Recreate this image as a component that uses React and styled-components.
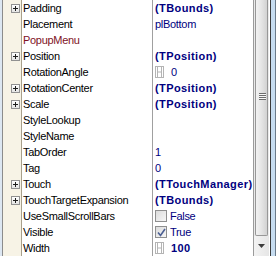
import React from 'react';
import styled, { createGlobalStyle, css } from 'styled-components';

const GlobalStyle = createGlobalStyle`
  html, body {
    margin: 0;
    padding: 0;
    background: #fff;
    overflow: hidden;
  }
`;

const Frame = styled.div`
  display: flex;
  width: 277px;
  height: 256px;
  overflow: hidden;
  font-family: "Liberation Sans", Arial, sans-serif;
  font-size: 11px;
`;

const LeftEdge = styled.div`
  width: 2px;
  flex-shrink: 0;
  background: #dde7f2;
  border-right: 1px solid #8c8c8c;
`;

const Grid = styled.div`
  display: flex;
  flex-direction: column;
  width: 250px;
  flex-shrink: 0;
`;

const Row = styled.div`
  display: flex;
  height: 16px;
  line-height: 16px;
`;

const Gutter = styled.div`
  width: 19px;
  flex-shrink: 0;
  background: #f7f3e6;
  border-right: 1px solid #a8a08c;
  display: flex;
  align-items: center;
  padding-left: 8px;
  box-sizing: border-box;
`;

const Name = styled.div`
  width: 131px;
  flex-shrink: 0;
  padding-left: 1px;
  box-sizing: border-box;
  border-right: 1px solid #a0a0a0;
  white-space: nowrap;
  overflow: hidden;
  letter-spacing: -0.3px;
  color: ${p => (p.$ref ? '#80121e' : '#000')};
`;

const Value = styled.div`
  flex: 1;
  min-width: 0;
  display: flex;
  align-items: center;
  padding-left: 2px;
  white-space: nowrap;
  overflow: hidden;
  color: #000080;
`;

const ValueText = styled.span`
  margin-left: ${p => p.$gap || 0}px;
  ${p =>
    p.$bold
      ? css`
          font-weight: bold;
          letter-spacing: 0.4px;
        `
      : css`
          letter-spacing: -0.3px;
        `}
`;

const PlusBox = styled.div`
  width: 9px;
  height: 9px;
  box-sizing: border-box;
  border: 1px solid #919191;
  background: linear-gradient(#ffffff, #e4e4e4);
  position: relative;

  &::before,
  &::after {
    content: '';
    position: absolute;
    background: #1e1e1e;
  }
  &::before {
    left: 1px;
    top: 3px;
    width: 5px;
    height: 1px;
  }
  &::after {
    left: 3px;
    top: 1px;
    width: 1px;
    height: 5px;
  }
`;

const CheckBox = styled.div`
  width: 12px;
  height: 12px;
  box-sizing: border-box;
  border: 1px solid #8f8f8f;
  background: linear-gradient(135deg, #dcdcdc, #f6f6f6);
  display: flex;
  align-items: center;
  justify-content: center;
  flex-shrink: 0;
`;

const Scrollbar = styled.div`
  width: 16px;
  flex-shrink: 0;
  display: flex;
  flex-direction: column;
  background: #eaeaea;
  border-left: 1px solid #9b9b9b;
  box-sizing: border-box;
`;

const Thumb = styled.div`
  height: 236px;
  margin: 0 1px;
  box-sizing: border-box;
  border: 1px solid #979797;
  border-top: none;
  border-radius: 0 0 2px 2px;
  background: linear-gradient(90deg, #f2f2f2, #e6e6e6 45%, #d2d2d2);
  position: relative;
`;

const Grip = styled.div`
  position: absolute;
  left: 3px;
  top: 93px;
  width: 7px;
  height: 7px;
  background: repeating-linear-gradient(#6e6e6e 0 1px, #f8f8f8 1px 2px);
`;

const ArrowButton = styled.div`
  flex: 1;
  display: flex;
  align-items: center;
  justify-content: center;
  background: linear-gradient(90deg, #f3f3f3, #e6e6e6);
`;

const RightEdge = styled.div`
  width: 7px;
  flex-shrink: 0;
  box-sizing: border-box;
  border-left: 1px solid #fff;
  background: linear-gradient(90deg, #3a3a3a 0 1px, #c6dcf0 1px 5px, #6a7a8a 5px);
`;

function SpinIcon() {
  return (
    <svg width="9" height="12" viewBox="0 0 9 12" style={{ flexShrink: 0 }}>
      <g fill="none" stroke="#b4b4b4" strokeWidth="1">
        <rect x="0.5" y="0.5" width="8" height="11" />
        <line x1="2.5" y1="0.5" x2="2.5" y2="11.5" />
        <line x1="6.5" y1="0.5" x2="6.5" y2="11.5" />
        <line x1="2.5" y1="6" x2="6.5" y2="6" />
      </g>
    </svg>
  );
}

function Check() {
  return (
    <svg width="9" height="9" viewBox="0 0 9 9">
      <path d="M1 4.5 L3.5 7.5 L8 1" fill="none" stroke="#4b5f93" strokeWidth="1.6" />
    </svg>
  );
}

const props = [
  { name: 'Padding', expand: true, value: '(TBounds)', bold: true },
  { name: 'Placement', value: 'plBottom' },
  { name: 'PopupMenu', ref: true, value: '' },
  { name: 'Position', expand: true, value: '(TPosition)', bold: true },
  { name: 'RotationAngle', spin: true, value: '0' },
  { name: 'RotationCenter', expand: true, value: '(TPosition)', bold: true },
  { name: 'Scale', expand: true, value: '(TPosition)', bold: true },
  { name: 'StyleLookup', value: '' },
  { name: 'StyleName', value: '' },
  { name: 'TabOrder', value: '1' },
  { name: 'Tag', value: '0' },
  { name: 'Touch', expand: true, value: '(TTouchManager)', bold: true },
  { name: 'TouchTargetExpansion', expand: true, value: '(TBounds)', bold: true },
  { name: 'UseSmallScrollBars', check: false, value: 'False' },
  { name: 'Visible', check: true, value: 'True' },
  { name: 'Width', spin: true, value: '100', bold: true },
];

function PropRow({ prop }) {
  const hasCheck = prop.check !== undefined;
  return (
    <Row>
      <Gutter>{prop.expand && <PlusBox />}</Gutter>
      <Name $ref={prop.ref}>{prop.name}</Name>
      <Value>
        {prop.spin && <SpinIcon />}
        {hasCheck && <CheckBox>{prop.check && <Check />}</CheckBox>}
        <ValueText $bold={prop.bold} $gap={prop.spin ? 7 : hasCheck ? 3 : 0}>
          {prop.value}
        </ValueText>
      </Value>
    </Row>
  );
}

export default function App() {
  return (
    <>
      <GlobalStyle />
      <Frame>
        <LeftEdge />
        <Grid>
          {props.map(p => (
            <PropRow key={p.name} prop={p} />
          ))}
        </Grid>
        <Scrollbar>
          <Thumb>
            <Grip />
          </Thumb>
          <ArrowButton>
            <svg width="7" height="4" viewBox="0 0 7 4">
              <path d="M0 0 H7 L3.5 4 Z" fill="#3c3c3c" />
            </svg>
          </ArrowButton>
        </Scrollbar>
        <RightEdge />
      </Frame>
    </>
  );
}
